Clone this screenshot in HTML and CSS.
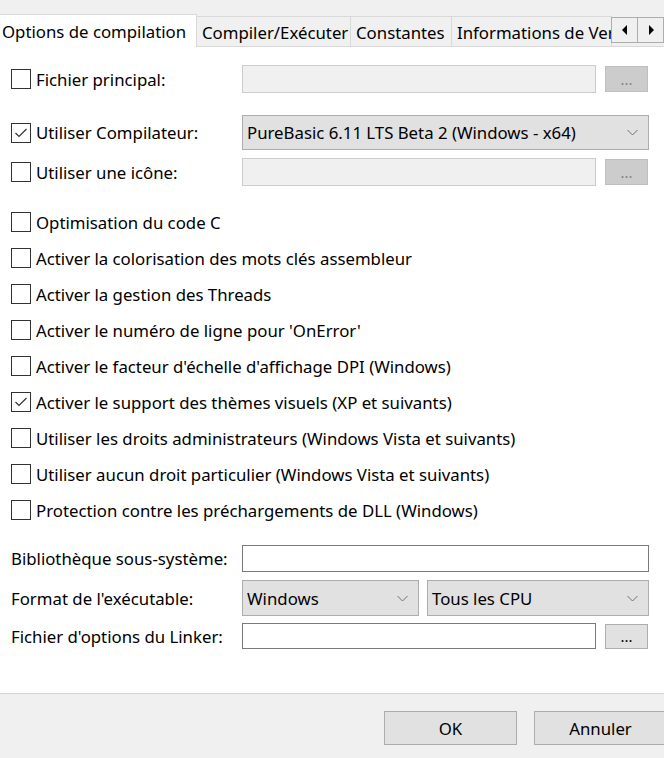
FILE: index.html
```html
<!DOCTYPE html>
<html lang="fr">
<head>
<meta charset="utf-8">
<title>Options de compilation</title>
<link rel="stylesheet" href="styles.css">
</head>
<body>
<div class="window">
  <div class="tabstrip">
    <div class="tab tab-active">Options de compilation</div>
    <div class="tab">Compiler/Exécuter</div>
    <div class="tab">Constantes</div>
    <div class="tab tab-clip">Informations de Version</div>
    <div class="arrows">
      <div class="arrow"><svg width="8" height="12" viewBox="0 0 8 12"><path d="M6 1 L1 6 L6 11 Z" fill="#000"/></svg></div>
      <div class="arrow"><svg width="8" height="12" viewBox="0 0 8 12"><path d="M2 1 L7 6 L2 11 Z" fill="#000"/></svg></div>
    </div>
  </div>

  <div class="panel">
    <div class="row row-file">
      <label class="check-label"><span class="box"></span><span>Fichier principal:</span></label>
      <div class="field field-disabled"></div>
      <div class="btn-dots btn-disabled">...</div>
    </div>

    <div class="row row-compiler">
      <label class="check-label"><span class="box"><svg width="18" height="18" viewBox="0 0 18 18"><path d="M3.5 9 L7 12.5 L14.5 5" fill="none" stroke="#333" stroke-width="1.2"/></svg></span><span>Utiliser Compilateur:</span></label>
      <div class="combo combo-wide"><span>PureBasic 6.11 LTS Beta 2 (Windows - x64)</span><svg class="chev" width="11" height="7" viewBox="0 0 11 7"><path d="M0.5 1 L5.5 6 L10.5 1" fill="none" stroke="#707070" stroke-width="1"/></svg></div>
    </div>

    <div class="row row-icon">
      <label class="check-label"><span class="box"></span><span>Utiliser une icône:</span></label>
      <div class="field field-disabled"></div>
      <div class="btn-dots btn-disabled">...</div>
    </div>

    <div class="checks">
      <label class="check-label check-row"><span class="box"></span><span>Optimisation du code C</span></label>
      <label class="check-label check-row"><span class="box"></span><span>Activer la colorisation des mots clés assembleur</span></label>
      <label class="check-label check-row"><span class="box"></span><span>Activer la gestion des Threads</span></label>
      <label class="check-label check-row"><span class="box"></span><span>Activer le numéro de ligne pour 'OnError'</span></label>
      <label class="check-label check-row"><span class="box"></span><span>Activer le facteur d'échelle d'affichage DPI (Windows)</span></label>
      <label class="check-label check-row"><span class="box"><svg width="18" height="18" viewBox="0 0 18 18"><path d="M3.5 9 L7 12.5 L14.5 5" fill="none" stroke="#333" stroke-width="1.2"/></svg></span><span>Activer le support des thèmes visuels (XP et suivants)</span></label>
      <label class="check-label check-row"><span class="box"></span><span>Utiliser les droits administrateurs (Windows Vista et suivants)</span></label>
      <label class="check-label check-row"><span class="box"></span><span>Utiliser aucun droit particulier (Windows Vista et suivants)</span></label>
      <label class="check-label check-row"><span class="box"></span><span>Protection contre les préchargements de DLL (Windows)</span></label>
    </div>

    <div class="row row-lib">
      <span class="plain-label">Bibliothèque sous-système:</span>
      <div class="field field-wide"></div>
    </div>

    <div class="row row-format">
      <span class="plain-label">Format de l'exécutable:</span>
      <div class="combo combo-format"><span>Windows</span><svg class="chev" width="11" height="7" viewBox="0 0 11 7"><path d="M0.5 1 L5.5 6 L10.5 1" fill="none" stroke="#707070" stroke-width="1"/></svg></div>
      <div class="combo combo-cpu"><span>Tous les CPU</span><svg class="chev" width="11" height="7" viewBox="0 0 11 7"><path d="M0.5 1 L5.5 6 L10.5 1" fill="none" stroke="#707070" stroke-width="1"/></svg></div>
    </div>

    <div class="row row-linker">
      <span class="plain-label">Fichier d'options du Linker:</span>
      <div class="field field-linker"></div>
      <div class="btn-dots btn-enabled">...</div>
    </div>
  </div>

  <div class="footer">
    <div class="btn">OK</div>
    <div class="btn">Annuler</div>
  </div>
</div>
</body>
</html>
```

FILE: styles.css
```css
* { box-sizing: border-box; }
html, body { margin: 0; padding: 0; }
body {
  font-family: "Noto Sans", "Open Sans", sans-serif;
  font-size: 16.8px;
  color: #000;
  background: #f0f0f0;
}
.window {
  width: 664px;
  height: 758px;
  display: flex;
  flex-direction: column;
  overflow: hidden;
  background: #f0f0f0;
}

/* tabs */
.tabstrip {
  height: 47px;
  padding-top: 15px;
  display: flex;
  align-items: flex-end;
  position: relative;
  border-bottom: 1px solid #d9d9d9;
  flex: none;
}
.tab {
  height: 30px;
  padding: 2px 5px 0;
  display: flex;
  align-items: center;
  white-space: nowrap;
  border: 1px solid #d9d9d9;
  border-bottom: none;
  border-left: none;
  background: #f0f0f0;
  flex: none;
}
.tab-active {
  height: 33px;
  background: #fff;
  margin-bottom: -1px;
  padding: 1px 6px 0 2px;
  width: 197px;
}
.tab:nth-child(2) { width: 154px; }
.tab:nth-child(3) { width: 101px; }
.tab-clip { width: 160px; overflow: hidden; }
.arrows {
  position: absolute;
  right: 0;
  top: 17px;
  display: flex;
}
.arrow {
  width: 27px;
  height: 26px;
  background: #f0f0f0;
  border: 1px solid #adadad;
  display: flex;
  align-items: center;
  justify-content: center;
}
.arrow + .arrow { width: 26px; border-left: none; }

/* panel */
.panel {
  flex: 1;
  background: #fff;
  padding: 18px 0 0 11px;
  display: flex;
  flex-direction: column;
}
.row {
  display: flex;
  align-items: center;
  flex: none;
}
.row-file { height: 28px; }
.row-compiler { height: 35px; margin-top: 22px; }
.row-icon { height: 28px; margin-top: 8px; }

.check-label {
  display: flex;
  align-items: center;
  width: 231px;
  flex: none;
  white-space: nowrap;
}
.box {
  width: 20px;
  height: 20px;
  border: 1px solid #333;
  background: #fff;
  margin-right: 5px;
  flex: none;
  display: flex;
  align-items: center;
  justify-content: center;
}
.checks {
  margin-top: 18px;
  display: flex;
  flex-direction: column;
}
.check-row { height: 36px; width: auto; }

.field {
  height: 28px;
  width: 354px;
  border: 1px solid #7a7a7a;
  background: #fff;
  flex: none;
}
.field-disabled {
  background: #f0f0f0;
  border-color: #cccccc;
}
.btn-dots {
  width: 43px;
  height: 26px;
  margin-left: 9px;
  display: flex;
  align-items: center;
  justify-content: center;
  flex: none;
  font-size: 15px;
}
.btn-disabled {
  background: #cccccc;
  border: 1px solid #bfbfbf;
  color: #838383;
}
.btn-enabled {
  background: #e1e1e1;
  border: 1px solid #adadad;
  color: #000;
}
.combo {
  height: 36px;
  background: #e1e1e1;
  border: 1px solid #adadad;
  display: flex;
  align-items: center;
  justify-content: space-between;
  padding: 0 10px 0 4px;
  white-space: nowrap;
  flex: none;
}
.combo-wide { width: 407px; height: 35px; }
.chev { flex: none; }

.plain-label { width: 231px; flex: none; white-space: nowrap; }
.row-lib { height: 27px; margin-top: 17px; }
.field-wide { width: 407px; height: 27px; }
.row-format { height: 36px; margin-top: 8px; }
.combo-format { width: 177px; }
.combo-cpu { width: 222px; margin-left: 8px; }
.row-linker { height: 26px; margin-top: 7px; }
.field-linker { height: 26px; }
.btn-enabled { height: 25px; }

/* footer */
.footer {
  height: 65px;
  flex: none;
  border-top: 1px solid #d5d5d5;
  background: #f0f0f0;
  display: flex;
  align-items: flex-start;
  padding: 17px 0 0 384px;
  gap: 17px;
}
.btn {
  width: 133px;
  height: 34px;
  flex: none;
  background: #e1e1e1;
  border: 1px solid #adadad;
  display: flex;
  align-items: center;
  justify-content: center;
}
```
